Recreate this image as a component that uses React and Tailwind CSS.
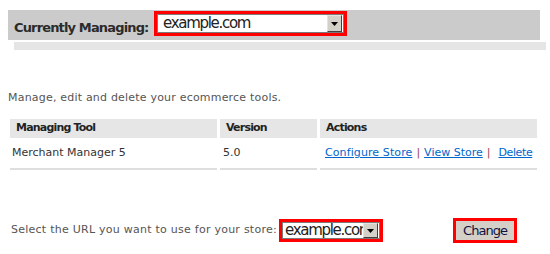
import React from "react";

function Arrow() {
  return (
    <svg width="7" height="4" viewBox="0 0 7 4"><polygon points="0,0 7,0 3.5,4" fill="#000" /></svg>
  );
}

function DropBtn({ w, h }) {
  return (
    <div
      className="flex items-center justify-center bg-[#d4d0c8] border border-t-[#e6e3de] border-l-[#e6e3de] border-r-[#404040] border-b-[#404040] shrink-0"
      style={{ width: w, height: h }}
    >
      <Arrow />
    </div>
  );
}

export default function App() {
  const font = { fontFamily: '"DejaVu Sans", Verdana, sans-serif' };
  return (
    <div className="w-[550px] h-[254px] bg-white relative overflow-hidden" style={font}>
      <div className="pt-[10px] pl-[8px]">
        <div className="w-[532px] h-[30px] bg-[#cbcbcb] flex items-start pl-[6px]">
          <span className="text-[13px] font-bold text-[#2b2b2b] mt-[8px] tracking-[-0.85px] w-[133px] whitespace-nowrap">Currently Managing:</span>
          <div className="ml-[7px] mt-[1px] w-[193px] h-[25px] border-[3px] border-[#ff0000] flex">
            <div className="flex-1 flex items-center border border-[#7a7a7a] bg-white pl-[5px] pr-[1px]">
              <span className="flex-1 text-[15px] text-[#222] leading-none tracking-[-1.3px]">example.com</span>
              <DropBtn w={15} h={17} />
            </div>
          </div>
        </div>
        <div className="ml-[6px] mt-[2px] w-[532px] h-[8px] bg-[#e5e5e5]" />
      </div>

      <div className="pl-[8px] mt-[41px] text-[11px] text-[#555] leading-[14px] tracking-[0.2px]">
        Manage, edit and delete your ecommerce tools.
      </div>

      <div className="ml-[10px] mt-[14px] grid grid-cols-[207px_97px_217px] gap-x-[3px] text-[11px]">
        <div className="h-[19px] bg-[#e6e6e6] font-bold text-[#222] pl-[6px] flex items-center tracking-[-0.8px]">Managing Tool</div>
        <div className="h-[19px] bg-[#e6e6e6] font-bold text-[#222] pl-[6px] flex items-center tracking-[-0.8px]">Version</div>
        <div className="h-[19px] bg-[#e6e6e6] font-bold text-[#222] pl-[6px] flex items-center tracking-[-0.8px]">Actions</div>
        <div className="h-[32px] border-b-2 border-[#dedede] text-[#333] pl-[2px] flex items-center">Merchant Manager 5</div>
        <div className="h-[32px] border-b-2 border-[#dedede] text-[#333] pl-[3px] flex items-center">5.0</div>
        <div className="h-[32px] border-b-2 border-[#dedede] pl-[5px] flex items-center text-[#0066cc]">
          <span className="underline tracking-[0.1px]">Configure Store</span>
          <span className="text-[#a04050] mx-[4px]">|</span>
          <span className="underline">View Store</span>
          <span className="text-[#a04050] ml-[4px] mr-[8px]">|</span>
          <span className="underline tracking-[-0.4px]">Delete</span>
        </div>
      </div>

      <div className="flex items-center mt-[48px]">
        <span className="ml-[11px] w-[265px] whitespace-nowrap text-[11px] text-[#555] tracking-[0.25px]">Select the URL you want to use for your store:</span>
        <div className="ml-[3px] w-[104px] h-[23px] border-[3px] border-[#ff0000] flex">
          <div className="flex-1 flex items-center border border-[#7a7a7a] bg-white pr-[1px] overflow-hidden">
            <span className="flex-1 overflow-hidden whitespace-nowrap text-[15px] text-[#222] leading-none pl-[2px] tracking-[-1.3px]">example.com</span>
            <DropBtn w={15} h={15} />
          </div>
        </div>
        <div className="ml-[70px] w-[64px] h-[25px] border-[3px] border-[#ff0000] bg-[#d4d0c8] flex items-center justify-center">
          <span className="text-[13px] text-[#101040] tracking-[-1px]">Change</span>
        </div>
      </div>
    </div>
  );
}
